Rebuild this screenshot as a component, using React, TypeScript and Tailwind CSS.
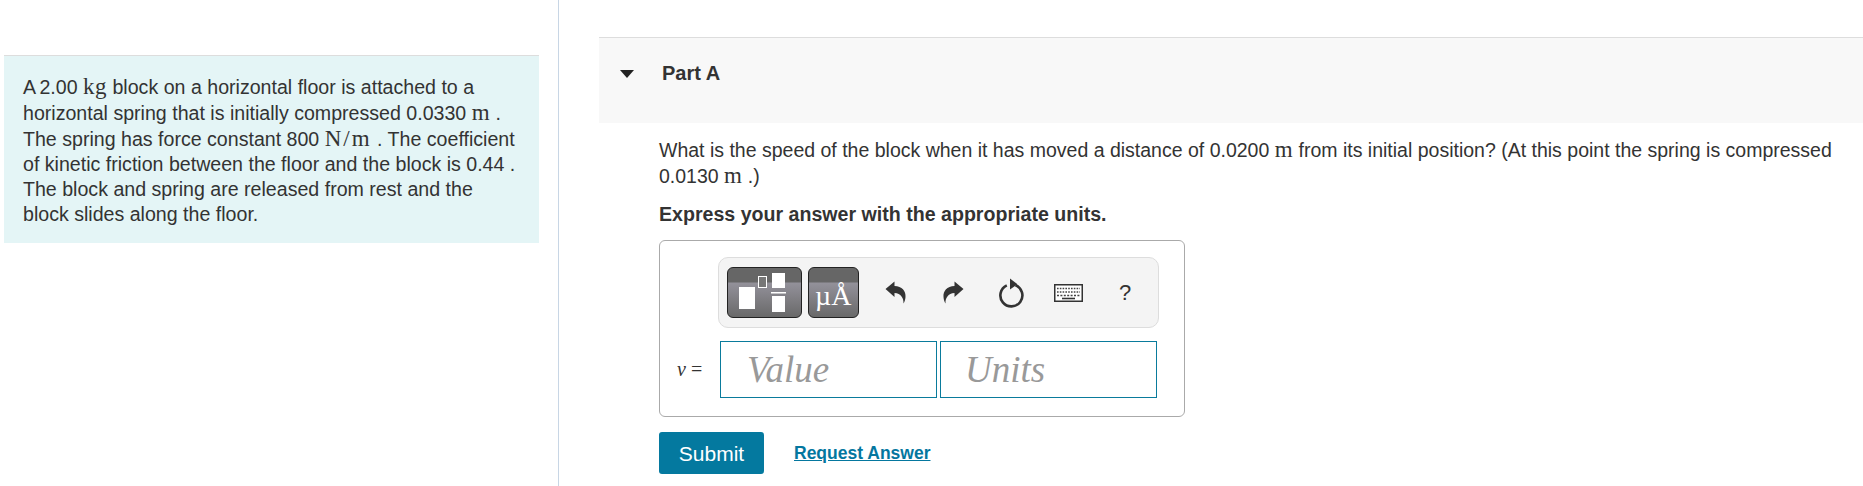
const sans = 'font-["Liberation_Sans",Arial,sans-serif]';

// MathJax-style unit text inside a sentence
function U({ children }: { children: React.ReactNode }) {
  return <span className='font-["Liberation_Serif",serif] text-[23px] tracking-[0.5px]'>{children}</span>;
}

function TemplatesIcon() {
  return (
    <svg width="75" height="50" viewBox="0 0 75 50" className="block">
      <rect x="11" y="19" width="16" height="22" fill="#fff" />
      <rect x="30.5" y="8.5" width="8" height="11" fill="#777" stroke="#fff" />
      <rect x="44" y="5" width="13" height="15" fill="#fff" />
      <rect x="43" y="24" width="15" height="1.5" fill="#fff" />
      <rect x="44" y="28" width="13" height="16" fill="#fff" />
    </svg>
  );
}

function Undo({ flip }: { flip?: boolean }) {
  return (
    <svg width="21" height="23" viewBox="0 0 21 23" className={flip ? '-scale-x-100' : ''}>
      <path d="M0.5 8 L9.5 0.5 V5 C17 5 21 10 20.5 16 C20.3 19 19.5 21 18.5 22.5 C18.8 17 16 12.5 9.5 12 V16 Z" fill="#333" />
    </svg>
  );
}

function Reset() {
  return (
    <svg width="28" height="30" viewBox="0 0 28 30">
      <path d="M9.8 7.4 A11 11 0 1 0 18.5 7.2" fill="none" stroke="#333" strokeWidth="2.6" />
      <path d="M13 0.5 L20.5 6.3 L13 11.5 Z" fill="#333" />
    </svg>
  );
}

function KeyboardIcon() {
  return (
    <svg width="29" height="18" viewBox="0 0 29 18">
      <rect x="0.75" y="0.75" width="27.5" height="16.5" fill="#fff" stroke="#333" strokeWidth="1.5" />
      <path d="M3 4.5h23M3 8h23" stroke="#444" strokeWidth="1.6" strokeDasharray="1.6 1.2" />
      <path d="M3 11.5h23" stroke="#444" strokeWidth="1.6" strokeDasharray="2 1.4" />
      <path d="M8 14.5h13" stroke="#333" strokeWidth="1.6" />
    </svg>
  );
}

const btn =
  'h-[51px] rounded-[6px] border border-[#222] overflow-hidden bg-[linear-gradient(to_bottom,#666_0,#666_14px,#93919a_15px,#696969_100%)]';

export default function App() {
  return (
    <div className={`${sans} flex h-[486px] w-full bg-white text-[19.5px] leading-[25px] text-[#333] overflow-hidden`}>
      {/* Problem intro */}
      <div className="w-[559px] shrink-0 border-r border-[#c8d6e5] pt-[55px] pl-[4px]">
        <div className="w-[535px] h-[188px] border-t border-[#ddd] bg-[#e4f5f6] pt-[18px] pl-[19px] pr-[20px] text-[19.6px]">
          <p>
            <span className="tracking-[-0.5px]">A </span>2.00 <U>kg</U> block on a horizontal floor is attached to a horizontal spring that is initially compressed 0.0330 <U>m</U> . The spring has force constant 800 <span className='font-["Liberation_Serif",serif] text-[23px] tracking-[2px]'>N/m</span> . The coefficient of kinetic friction between the floor and the block is 0.44 . The block and spring are released from rest and the block slides along the floor.
          </p>
        </div>
      </div>

      {/* Part A */}
      <div className="flex-1 min-w-0 pt-[37px] pl-[40px]">
        <div className="h-[86px] border-t border-[#ddd] bg-[#f8f8f8] flex items-start pt-[23px] pl-[21px]">
          <span className="mt-[9px] w-0 h-0 border-x-[7.5px] border-x-transparent border-t-[8px] border-t-[#222]" />
          <h2 className="ml-[28px] font-bold text-[20px] text-[#333]">Part A</h2>
        </div>

        <div className="pl-[60px] pr-[15px] pt-[14px]">
          <p>
            What is the speed of the block when it has moved a distance of 0.0200 <U>m</U> from its initial position? (At this point the spring is compressed 0.0130 <U>m</U> .)
          </p>
          <p className="mt-[13px] font-bold text-[19.6px]">Express your answer with the appropriate units.</p>

          <div className="mt-[13px] w-[526px] h-[177px] rounded-[6px] border border-[#aaa] pt-[16px]">
            <div className="ml-[58px] w-[441px] h-[71px] rounded-[10px] border border-[#ddd] bg-[#f4f4f4] flex items-center pl-[8px]">
              <div className={`${btn} w-[75px]`}>
                <TemplatesIcon />
              </div>
              <div className={`${btn} ml-[6px] w-[51px] relative`}>
                <span className='absolute left-[6px] top-[11px] font-["Liberation_Serif",serif] text-[28px] leading-[34px] text-white whitespace-nowrap'>
                  µÅ
                </span>
              </div>
              <div className="ml-[26px] flex items-center">
                <div className="w-[58px]"><Undo /></div>
                <div className="w-[45px]"><Undo flip /></div>
                <div className="w-[45px] flex justify-center"><Reset /></div>
                <div className="ml-[21px]"><KeyboardIcon /></div>
                <span className="ml-[36px] text-[22px] leading-none">?</span>
              </div>
            </div>

            <div className="mt-[13px] flex items-center">
              <span className='ml-[17px] w-[43px] font-["Liberation_Serif",serif] text-[20px] whitespace-nowrap'>
                <i>v</i> =
              </span>
              <div className='w-[217px] h-[57px] border border-[#0a7b9c] flex items-center pl-[26px] font-["Liberation_Serif",serif] italic text-[37px] text-[#999]'>
                Value
              </div>
              <div className='ml-[3px] w-[217px] h-[57px] border border-[#0a7b9c] flex items-center pl-[24px] font-["Liberation_Serif",serif] italic text-[37px] text-[#999]'>
                Units
              </div>
            </div>
          </div>

          <div className="mt-[15px] flex items-center">
            <button className="w-[105px] h-[42px] rounded-[3px] bg-[#04799f] text-white text-[21px]">Submit</button>
            <a className="ml-[30px] font-bold text-[17.5px] text-[#04779f] underline">Request Answer</a>
          </div>
        </div>
      </div>
    </div>
  );
}
